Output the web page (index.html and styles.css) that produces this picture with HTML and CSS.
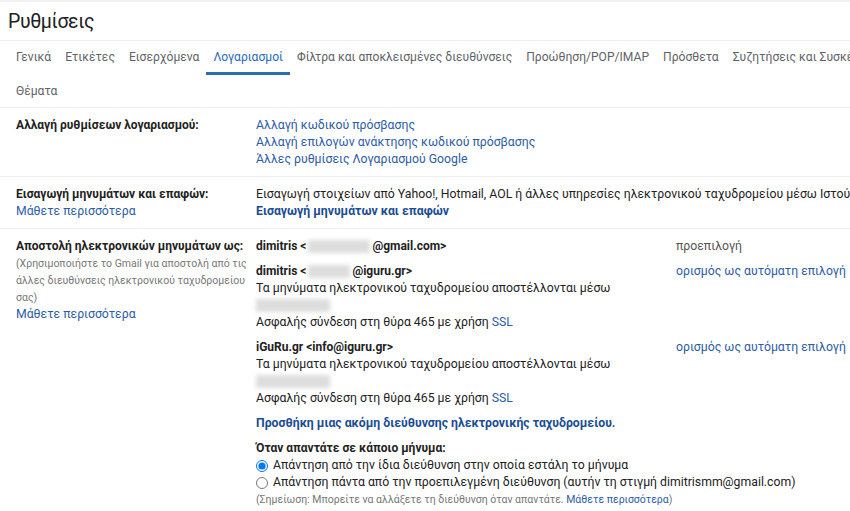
FILE: index.html
```html
<!DOCTYPE html>
<html lang="el">
<head>
  <meta charset="UTF-8" />
  <meta name="viewport" content="width=device-width, initial-scale=1.0"/>
  <title>Ρυθμίσεις - Λογαριασμοί</title>
  <link rel="stylesheet" href="styles.css">
</head>
<body>
  <div class="page">
    <div class="titulo">
      <h1>Ρυθμίσεις</h1>
    </div>

    <div class="abas">
      <a class="aba">Γενικά</a>
      <a class="aba">Ετικέτες</a>
      <a class="aba">Εισερχόμενα</a>
      <a class="aba ativa">Λογαριασμοί</a>
      <a class="aba">Φίλτρα και αποκλεισμένες διευθύνσεις</a>
      <a class="aba">Προώθηση/POP/IMAP</a>
      <a class="aba">Πρόσθετα</a>
      <a class="aba">Συζητήσεις και Συσκέψεις</a>
      <a class="aba">Για προχωρημένους</a>
      <a class="aba">Εκτός σύνδεσης</a>
      <a class="aba">Θέματα</a>
    </div>

    <div class="linha">
      <div class="rotulo">
        <strong>Αλλαγή ρυθμίσεων λογαριασμού:</strong>
      </div>
      <div class="valor">
        <a class="link">Αλλαγή κωδικού πρόσβασης</a><br>
        <a class="link">Αλλαγή επιλογών ανάκτησης κωδικού πρόσβασης</a><br>
        <a class="link">Άλλες ρυθμίσεις Λογαριασμού Google</a>
      </div>
    </div>

    <div class="linha">
      <div class="rotulo">
        <strong>Εισαγωγή μηνυμάτων και επαφών:</strong><br>
        <a class="link">Μάθετε περισσότερα</a>
      </div>
      <div class="valor nowrap">
        Εισαγωγή στοιχείων από Yahoo!, Hotmail, AOL ή άλλες υπηρεσίες ηλεκτρονικού ταχυδρομείου μέσω Ιστού ή POP3.<br>
        <a class="link forte">Εισαγωγή μηνυμάτων και επαφών</a>
      </div>
    </div>

    <div class="linha">
      <div class="rotulo">
        <strong>Αποστολή ηλεκτρονικών μηνυμάτων ως:</strong>
        <div class="nota">(Χρησιμοποιήστε το Gmail για αποστολή από τις άλλες διευθύνσεις ηλεκτρονικού ταχυδρομείου σας)</div>
        <a class="link">Μάθετε περισσότερα</a>
      </div>
      <div class="valor">
        <div class="conta">
          <div class="conta-info">
            <strong>dimitris &lt;<span class="borrado b1"></span>@gmail.com&gt;</strong>
          </div>
          <div class="conta-acao cinza">προεπιλογή</div>
        </div>

        <div class="conta">
          <div class="conta-info">
            <strong>dimitris &lt;<span class="borrado b2"></span>@iguru.gr&gt;</strong><br>
            Τα μηνύματα ηλεκτρονικού ταχυδρομείου αποστέλλονται μέσω<br>
            <span class="borrado b3"></span><br>
            Ασφαλής σύνδεση στη θύρα 465 με χρήση <a class="link">SSL</a>
          </div>
          <div class="conta-acao"><a class="link">ορισμός ως αυτόματη επιλογή</a></div>
        </div>

        <div class="conta">
          <div class="conta-info">
            <strong>iGuRu.gr &lt;info@iguru.gr&gt;</strong><br>
            Τα μηνύματα ηλεκτρονικού ταχυδρομείου αποστέλλονται μέσω<br>
            <span class="borrado b3"></span><br>
            Ασφαλής σύνδεση στη θύρα 465 με χρήση <a class="link">SSL</a>
          </div>
          <div class="conta-acao"><a class="link">ορισμός ως αυτόματη επιλογή</a></div>
        </div>

        <div class="conta">
          <a class="link forte">Προσθήκη μιας ακόμη διεύθυνσης ηλεκτρονικής ταχυδρομείου.</a>
        </div>

        <div class="resposta">
          <strong>Όταν απαντάτε σε κάποιο μήνυμα:</strong>
          <label class="opcao"><input type="radio" name="resp" checked> Απάντηση από την ίδια διεύθυνση στην οποία εστάλη το μήνυμα</label>
          <label class="opcao"><input type="radio" name="resp"> Απάντηση πάντα από την προεπιλεγμένη διεύθυνση (αυτήν τη στιγμή dimitrismm@gmail.com)</label>
          <div class="nota">(Σημείωση: Μπορείτε να αλλάξετε τη διεύθυνση όταν απαντάτε. <a class="link">Μάθετε περισσότερα</a>)</div>
        </div>
      </div>
    </div>
  </div>
</body>
</html>
```

FILE: styles.css
```css
body {
  margin: 0;
  background-color: #fff;
  color: #222;
  font-family: Roboto, "Liberation Sans", Arial, sans-serif;
  font-size: 12.25px;
  overflow: hidden;
}
strong {
  font-size: 12px;
}
.page {
  width: 1200px;
  border-top: 2px solid #f1f1f1;
}
.titulo {
  padding: 0 8px;
  height: 38px;
  border-bottom: 1px solid #eee;
}
.titulo h1 {
  margin: 0;
  font-family: Roboto, sans-serif;
  font-weight: 400;
  font-size: 19.5px;
  letter-spacing: -0.4px;
  line-height: 40px;
  color: #202124;
}
.abas {
  display: flex;
  flex-wrap: wrap;
  row-gap: 2px;
  width: 1130px;
  padding: 0 9px;
  border-bottom: 1px solid #eee;
}
.aba {
  position: relative;
  display: block;
  padding: 0 7px;
  height: 32px;
  line-height: 32px;
  font-family: Roboto, sans-serif;
  font-size: 12.1px;
  color: #5f6368;
  cursor: pointer;
}
.aba.ativa {
  color: #2a6cb5;
}
.aba.ativa::after {
  content: "";
  position: absolute;
  left: 0;
  right: 0;
  bottom: -2px;
  height: 3px;
  background-color: #2a6cb5;
}
.linha {
  display: flex;
  padding: 9px 0 8px;
  border-bottom: 1px solid #eee;
  line-height: 17px;
}
.rotulo {
  width: 240px;
  padding-left: 16px;
  flex-shrink: 0;
}
.valor {
  flex: 1;
}
.nowrap {
  white-space: nowrap;
}
.link {
  color: #2d5ca6;
  cursor: pointer;
}
.link.forte {
  font-weight: bold;
  color: #1a4d95;
}
.nota {
  font-size: 10.5px;
  color: #777;
  line-height: 17px;
}
.conta {
  display: flex;
  margin-bottom: 8px;
}
.conta-info {
  width: 420px;
}
.cinza {
  color: #555;
}
.borrado {
  display: inline-block;
  vertical-align: middle;
  height: 13px;
  background-color: #ddd;
  filter: blur(2px);
}
.b1 { width: 62px; margin: 0 2px; }
.b2 { width: 42px; margin: 0 2px; }
.b3 { width: 74px; }
.resposta {
  margin-top: 8px;
}
.opcao {
  display: flex;
  align-items: center;
}
.opcao input {
  margin: 0 5px 0 0;
  width: 12px;
  height: 12px;
}
```
